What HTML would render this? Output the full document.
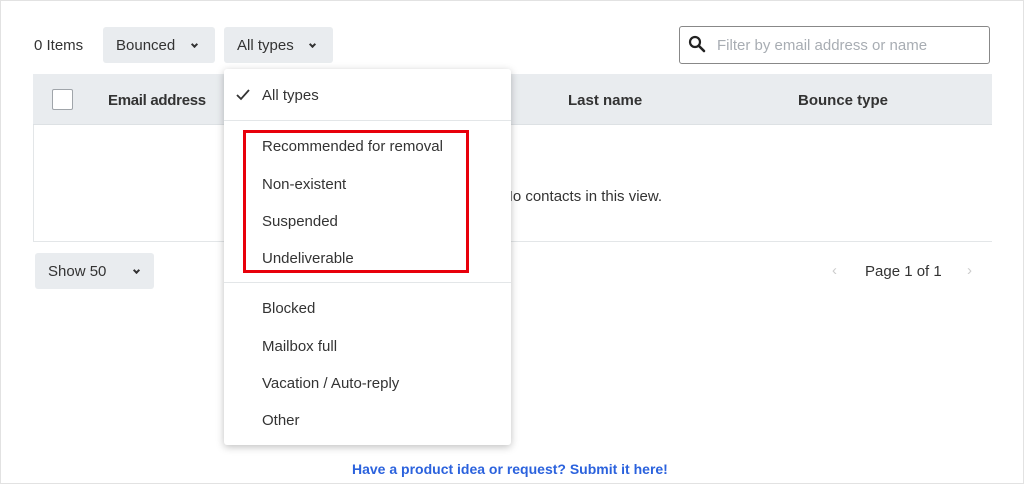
<!DOCTYPE html>
<html><head><style>
*{box-sizing:border-box;margin:0;padding:0}
body{width:1024px;height:484px;background:#fff;font-family:"Liberation Sans",Arial,sans-serif;color:#2c3338;position:relative;overflow:hidden}
.frame{position:absolute;left:0;top:0;width:1024px;height:484px;border:1px solid #e2e2e2}
.abs{position:absolute}
.btn{position:absolute;background:#e9ecef;border-radius:3px;height:36px;font-size:15px;line-height:38px;padding-left:13px;color:#333}
.chev{position:absolute;top:15px;width:5px;height:5px;border-right:2px solid #333;border-bottom:2px solid #333;transform:rotate(45deg)}
.txt{position:absolute;font-size:15px;white-space:nowrap}
.menu{position:absolute;left:224px;top:69px;width:287px;height:376px;background:#fff;border-radius:3px;box-shadow:0 2px 8px rgba(0,0,0,.25)}
.mi{position:absolute;left:38px;font-size:15px;color:#333;white-space:nowrap}
</style></head><body>
<div class="frame"></div>
<div class="txt" style="left:34px;top:37px;color:#333">0 Items</div>
<div class="btn" style="left:103px;top:27px;width:112px">Bounced<span class="chev" style="left:89px"></span></div>
<div class="btn" style="left:224px;top:27px;width:109px">All types<span class="chev" style="left:86px"></span></div>
<div class="abs" style="left:679px;top:26px;width:311px;height:38px;border:1px solid #888;border-radius:3px"></div>
<svg class="abs" style="left:688px;top:35px" width="18" height="18" viewBox="0 0 18 18"><circle cx="7" cy="7" r="5" fill="none" stroke="#222" stroke-width="2.2"/><path d="M11 11l5 5" stroke="#222" stroke-width="2.6" stroke-linecap="round"/></svg>
<div class="txt" style="left:717px;top:37px;color:#a8adb3">Filter by email address or name</div>
<div class="abs" style="left:33px;top:74px;width:959px;height:168px;border-left:1px solid #e3e6e8;border-bottom:1px solid #e3e6e8"></div>
<div class="abs" style="left:33px;top:74px;width:959px;height:51px;background:#e9ecef;border-bottom:1px solid #dde1e4"></div>
<div class="abs" style="left:52px;top:89px;width:21px;height:21px;background:#fff;border:1px solid #a0a5aa;border-radius:2px"></div>
<div class="txt" style="left:108px;top:92px;font-weight:bold;color:#333;letter-spacing:-0.3px">Email address</div>
<div class="txt" style="left:568px;top:92px;font-weight:bold;color:#333">Last name</div>
<div class="txt" style="left:798px;top:92px;font-weight:bold;color:#333">Bounce type</div>
<div class="txt" style="left:502px;top:188px;color:#333">No contacts in this view.</div>
<div class="btn" style="left:35px;top:253px;width:119px">Show 50<span class="chev" style="left:99px"></span></div>
<div class="txt" style="left:832px;top:262px;color:#ccc">‹</div>
<div class="txt" style="left:865px;top:263px;color:#333">Page 1 of 1</div>
<div class="txt" style="left:967px;top:262px;color:#ccc">›</div>
<div class="menu">
<svg class="abs" style="left:12px;top:20px" width="14" height="12" viewBox="0 0 14 12"><path d="M1 6l4 4 8-9" fill="none" stroke="#333" stroke-width="1.8"/></svg>
<div class="mi" style="top:18px">All types</div>
<div class="abs" style="left:0;top:51px;width:287px;height:1px;background:#e3e6e8"></div>
<div class="mi" style="top:69px">Recommended for removal</div>
<div class="mi" style="top:107px">Non-existent</div>
<div class="mi" style="top:144px">Suspended</div>
<div class="mi" style="top:181px">Undeliverable</div>
<div class="abs" style="left:0;top:213px;width:287px;height:1px;background:#e3e6e8"></div>
<div class="mi" style="top:231px">Blocked</div>
<div class="mi" style="top:269px">Mailbox full</div>
<div class="mi" style="top:306px">Vacation / Auto-reply</div>
<div class="mi" style="top:343px">Other</div>
</div>
<div class="abs" style="left:243px;top:130px;width:226px;height:143px;border:3px solid #e8000b"></div>
<div class="txt" style="left:352px;top:461px;font-size:14px;font-weight:bold;color:#2b62dd">Have a product idea or request? Submit it here!</div>
</body></html>
